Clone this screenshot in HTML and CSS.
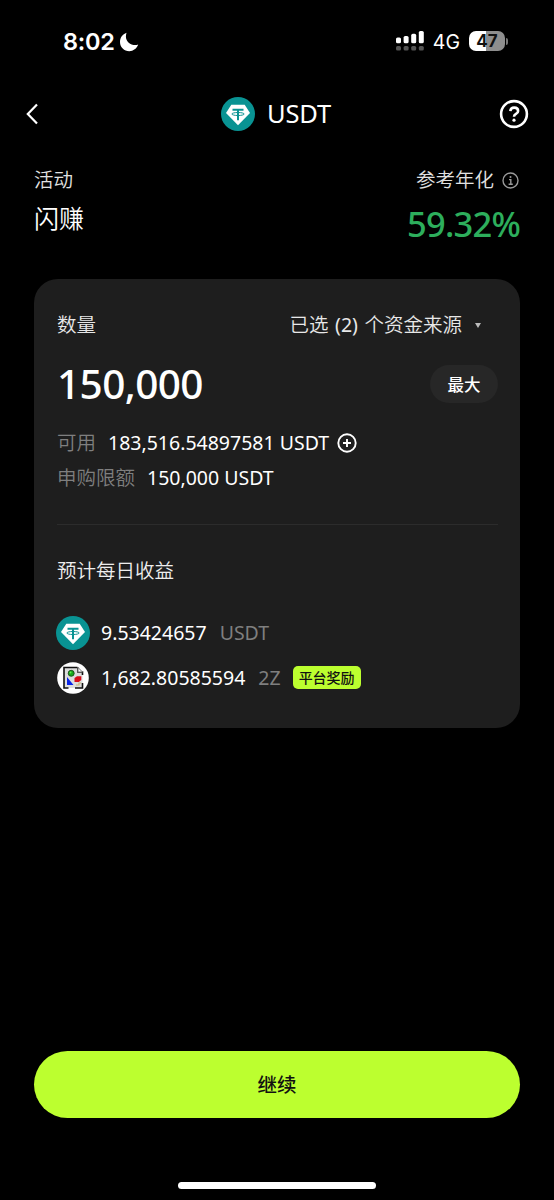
FILE: index.html
```html
<!DOCTYPE html>
<html lang="zh-CN">
<head>
  <meta charset="UTF-8" />
  <meta name="viewport" content="width=device-width, initial-scale=1" />
  <title>USDT 闪赚</title>
  <link rel="stylesheet" href="styles.css">
</head>
<body>
  <!-- shared coin logo -->
  <svg width="0" height="0" class="defs">
    <symbol id="usdt" viewBox="0 0 34 34">
      <circle cx="17" cy="17" r="17" fill="#099393" />
      <path d="M10.300 7.800h13.400L29 16 17 28.200 5 16z" fill="#fff" />
      <path d="M11.500 12.800h11M17 12.800v10.400" fill="none" stroke="#099393" stroke-width="2" />
      <ellipse cx="17" cy="17" rx="6.200" ry="1.500" fill="none" stroke="#099393" stroke-width="1" />
    </symbol>
  </svg>

  <div class="status-bar">
    <div class="clock">
      <span>8:02</span>
      <svg width="20" height="20" viewBox="0 0 20 20"><path d="M7.500 .8C3.500 2.200 1 5.800 1 10c0 5.200 4.200 9.200 9.300 9.200 4 0 7.400-2.500 8.900-6.600-1.100.4-2 .5-3 .5C11.300 13.100 7 9.700 6.900 4.800c0-1.400.2-2.700.6-4z" fill="#fff" /></svg>
    </div>
    <div class="signal">
      <svg width="28" height="20" viewBox="0 0 28 20">
        <g fill="#fff">
          <rect x="0" y="6.500" width="5" height="5.800" rx="1.600" />
          <rect x="7.600" y="5" width="5" height="7.300" rx="1.600" />
          <rect x="15.200" y="2.800" width="5" height="9.500" rx="1.600" />
          <rect x="22.800" y="0" width="5" height="12.300" rx="1.600" />
        </g>
        <g fill="#555">
          <rect x="0" y="15" width="5" height="4.600" rx="1.500" />
          <rect x="7.600" y="15" width="5" height="4.600" rx="1.500" />
          <rect x="15.200" y="15" width="5" height="4.600" rx="1.500" />
          <rect x="22.800" y="15" width="5" height="4.600" rx="1.500" />
        </g>
      </svg>
      <span class="network">4G</span>
      <span class="battery">47</span>
      <span class="battery-tip"></span>
    </div>
  </div>

  <header>
    <svg class="back" width="12" height="22" viewBox="0 0 12 22"><path d="M11 1.500 1.800 11 11 20.500" fill="none" stroke="#fff" stroke-width="2.200" /></svg>
    <div class="title">
      <svg width="34" height="34"><use href="#usdt" /></svg>
      <h1>USDT</h1>
    </div>
    <svg class="help" width="30" height="30" viewBox="0 0 30 30" fill="none" stroke="#fff" stroke-width="2.600">
      <circle cx="15" cy="15" r="12.900" />
      <path d="M11.300 12.200c.2-2.200 1.700-3.600 3.900-3.600s3.900 1.300 3.900 3.300c0 1.500-.8 2.300-2.100 3-1.400.8-2 1.300-2 2.900" />
      <circle cx="15" cy="21.200" r="1.600" fill="#fff" stroke="none" />
    </svg>
  </header>

  <section class="summary">
    <div>
      <div class="label">活动</div>
      <div class="product">闪赚</div>
    </div>
    <div class="apr">
      <div class="label">参考年化
        <svg width="17" height="17" viewBox="0 0 17 17" fill="none" stroke="#999" stroke-width="1.400">
          <circle cx="8.500" cy="8.500" r="7.500" />
          <path d="M7 7.600h1.800v4.600M6.600 12.200h4.200" />
          <circle cx="8.500" cy="4.900" r="1" fill="#999" stroke="none" />
        </svg>
      </div>
      <div class="rate">59.32%</div>
    </div>
  </section>

  <main class="card">
    <div class="row source">
      <span>数量</span>
      <span class="select"><span>已选 <span class="count">(2)</span> 个资金来源</span><i class="caret"></i></span>
    </div>
    <div class="row amount">
      <span class="value">150,000</span>
      <button class="max">最大</button>
    </div>
    <div class="info">
      <span class="muted">可用</span>
      <span class="available">183,516.54897581 USDT</span>
      <svg width="20" height="20" viewBox="0 0 20 20" fill="none" stroke="#fff" stroke-width="1.900">
        <circle cx="10" cy="10" r="8.700" />
        <path d="M10 6v8M6 10h8" />
      </svg>
    </div>
    <div class="info">
      <span class="muted">申购限额</span>
      <span class="limit">150,000 USDT</span>
    </div>
    <hr>
    <h2>预计每日收益</h2>
    <div class="reward">
      <svg width="34" height="34"><use href="#usdt" /></svg>
      <span class="num">9.53424657</span>
      <span class="muted">USDT</span>
    </div>
    <div class="reward">
      <svg width="34" height="34" viewBox="0 0 34 34">
        <circle cx="17" cy="17" r="15.800" fill="#fff" />
        <path d="M8 6.500h14l4.500 4.500v16H8z" fill="#ddd" />
        <path d="M12.500 27H8V6.500h13.500M22 6.500V11h4.500v3M26.500 22v5H19" fill="none" stroke="#111" stroke-width="1.600" />
        <path d="M22 6.500 26.500 11H22z" fill="#fff" stroke="#777" />
        <path d="M11 16v8h6.500z" fill="#0824e8" />
        <path d="M18.500 17l2.500-1.800h4.300V19l-2.500 2h-4.300z" fill="#d80b18" />
        <circle cx="15.200" cy="12.300" r="3" fill="#18a51c" stroke="#123d12" stroke-width=".8" />
        <circle cx="14.500" cy="11.500" r="1" fill="#5ff04d" />
        <path d="M20 24h3v-2h2" fill="none" stroke="#c8b878" stroke-width="1.200" />
      </svg>
      <span class="num">1,682.80585594</span>
      <span class="muted">2Z</span>
      <span class="tag">平台奖励</span>
    </div>
  </main>

  <footer>
    <button class="continue">继续</button>
    <div class="home-indicator"></div>
  </footer>
</body>
</html>
```
FILE: styles.css
```css
* {
  box-sizing: border-box;
}
body {
  display: flex;
  flex-direction: column;
  height: 1200px;
  margin: 0;
  background: #000;
  color: #fff;
  font-family: "Noto Sans", "Noto Sans CJK SC", sans-serif;
  font-size: 19.5px;
  line-height: 28px;
}
svg {
  display: block;
  flex: none;
}
.defs {
  position: absolute;
}
button {
  border: 0;
  padding: 0;
  font-family: inherit;
}
h1, h2 {
  margin: 0;
  font-weight: 400;
}
.status-bar {
  display: flex;
  justify-content: space-between;
  align-items: center;
  height: 82px;
  padding: 0 46px 0 63px;
  font-family: Inter, sans-serif;
}
.clock {
  display: flex;
  align-items: center;
  gap: 5px;
  padding-top: 1px;
  font-size: 23.5px;
  font-weight: 600;
  letter-spacing: -0.3px;
}
.signal {
  display: flex;
  align-items: center;
}
.signal svg {
  margin-right: 1px;
}
.network {
  margin-left: 8px;
  padding-top: 1px;
  font-size: 19.5px;
}
.battery {
  width: 36px;
  height: 20px;
  margin-left: 9px;
  border-radius: 7px;
  background: linear-gradient(90deg, #fff 47%, #8e8e8e 47%);
  color: #111;
  font-size: 17px;
  font-weight: 700;
  line-height: 20px;
  text-align: center;
}
.battery-tip {
  width: 2px;
  height: 7px;
  margin-left: 1px;
  border-radius: 0 2px 2px 0;
  background: #777;
}
header {
  display: flex;
  justify-content: space-between;
  align-items: center;
  height: 64px;
  padding: 0 25px 0 26px;
}
.title {
  display: flex;
  align-items: center;
  gap: 12px;
  margin-left: 15px;
}
h1 {
  font-size: 25.5px;
  line-height: 34px;
  letter-spacing: -0.2px;
  padding-bottom: 2px;
}
.summary {
  display: flex;
  justify-content: space-between;
  height: 133px;
  padding: 20px 34px 0;
}
.label {
  display: flex;
  align-items: center;
  color: #e2e2e2;
  font-weight: 350;
}
.label svg {
  margin: 0 1px 0 8px;
}
.product {
  margin-top: 7px;
  font-size: 25px;
  font-weight: 350;
  line-height: 34px;
}
.apr {
  display: flex;
  flex-direction: column;
  align-items: flex-end;
}
.rate {
  margin-top: 10px;
  color: #2dae5c;
  font-size: 34.5px;
  font-weight: 500;
  line-height: 40px;
  letter-spacing: -0.8px;
}
.card {
  height: 449px;
  margin: 0 34px;
  padding: 32px 22px 0 23px;
  border-radius: 24px;
  background: #1e1e1e;
}
.row {
  display: flex;
  justify-content: space-between;
  align-items: center;
}
.source {
  color: #e8e8e8;
  font-weight: 350;
}
.select {
  display: flex;
  align-items: center;
  word-spacing: 1.5px;
}
.count {
  font-weight: 400;
}
.caret {
  margin: 0 17px 0 13px;
  border: 3.5px solid transparent;
  border-top: 5px solid #bbb;
  border-bottom: 0;
}
.amount {
  height: 38px;
  margin-top: 26px;
}
.value {
  font-size: 40.5px;
  font-weight: 500;
  letter-spacing: -0.6px;
}
.max {
  width: 68px;
  height: 38px;
  border-radius: 19px;
  background: #272727;
  color: #fff;
  font-size: 16.5px;
  font-weight: 500;
}
.info {
  display: flex;
  align-items: center;
  height: 35px;
}
.amount + .info {
  margin-top: 22px;
}
.info span + span {
  margin-left: 12px;
}
.info svg {
  margin-left: 8px;
}
.muted {
  color: #7f7f7f;
}
.info .muted {
  font-weight: 350;
}
hr {
  height: 1px;
  margin: 29px 0 32px;
  border: 0;
  background: #2c2c2c;
}
h2 {
  color: #eee;
  font-size: 19.5px;
  font-weight: 350;
}
.reward {
  display: flex;
  align-items: center;
  height: 45px;
  margin-left: -1px;
}
h2 + .reward {
  margin-top: 25px;
}
.num {
  margin: 0 13px 0 11px;
}
.tag {
  width: 68px;
  height: 23px;
  margin-left: 12px;
  border-radius: 5px;
  background: #bcff2f;
  color: #111;
  font-size: 14px;
  font-weight: 500;
  line-height: 23px;
  text-align: center;
}
footer {
  display: flex;
  flex-direction: column;
  align-items: center;
  margin-top: auto;
  padding: 0 34px 11px;
}
.continue {
  width: 100%;
  height: 67px;
  padding-bottom: 2px;
  border-radius: 34px;
  background: #bcff2f;
  color: #111;
  font-size: 19.5px;
  font-weight: 500;
}
.home-indicator {
  width: 198px;
  height: 7px;
  margin-top: 64px;
  border-radius: 4px;
  background: #fff;
}
```
